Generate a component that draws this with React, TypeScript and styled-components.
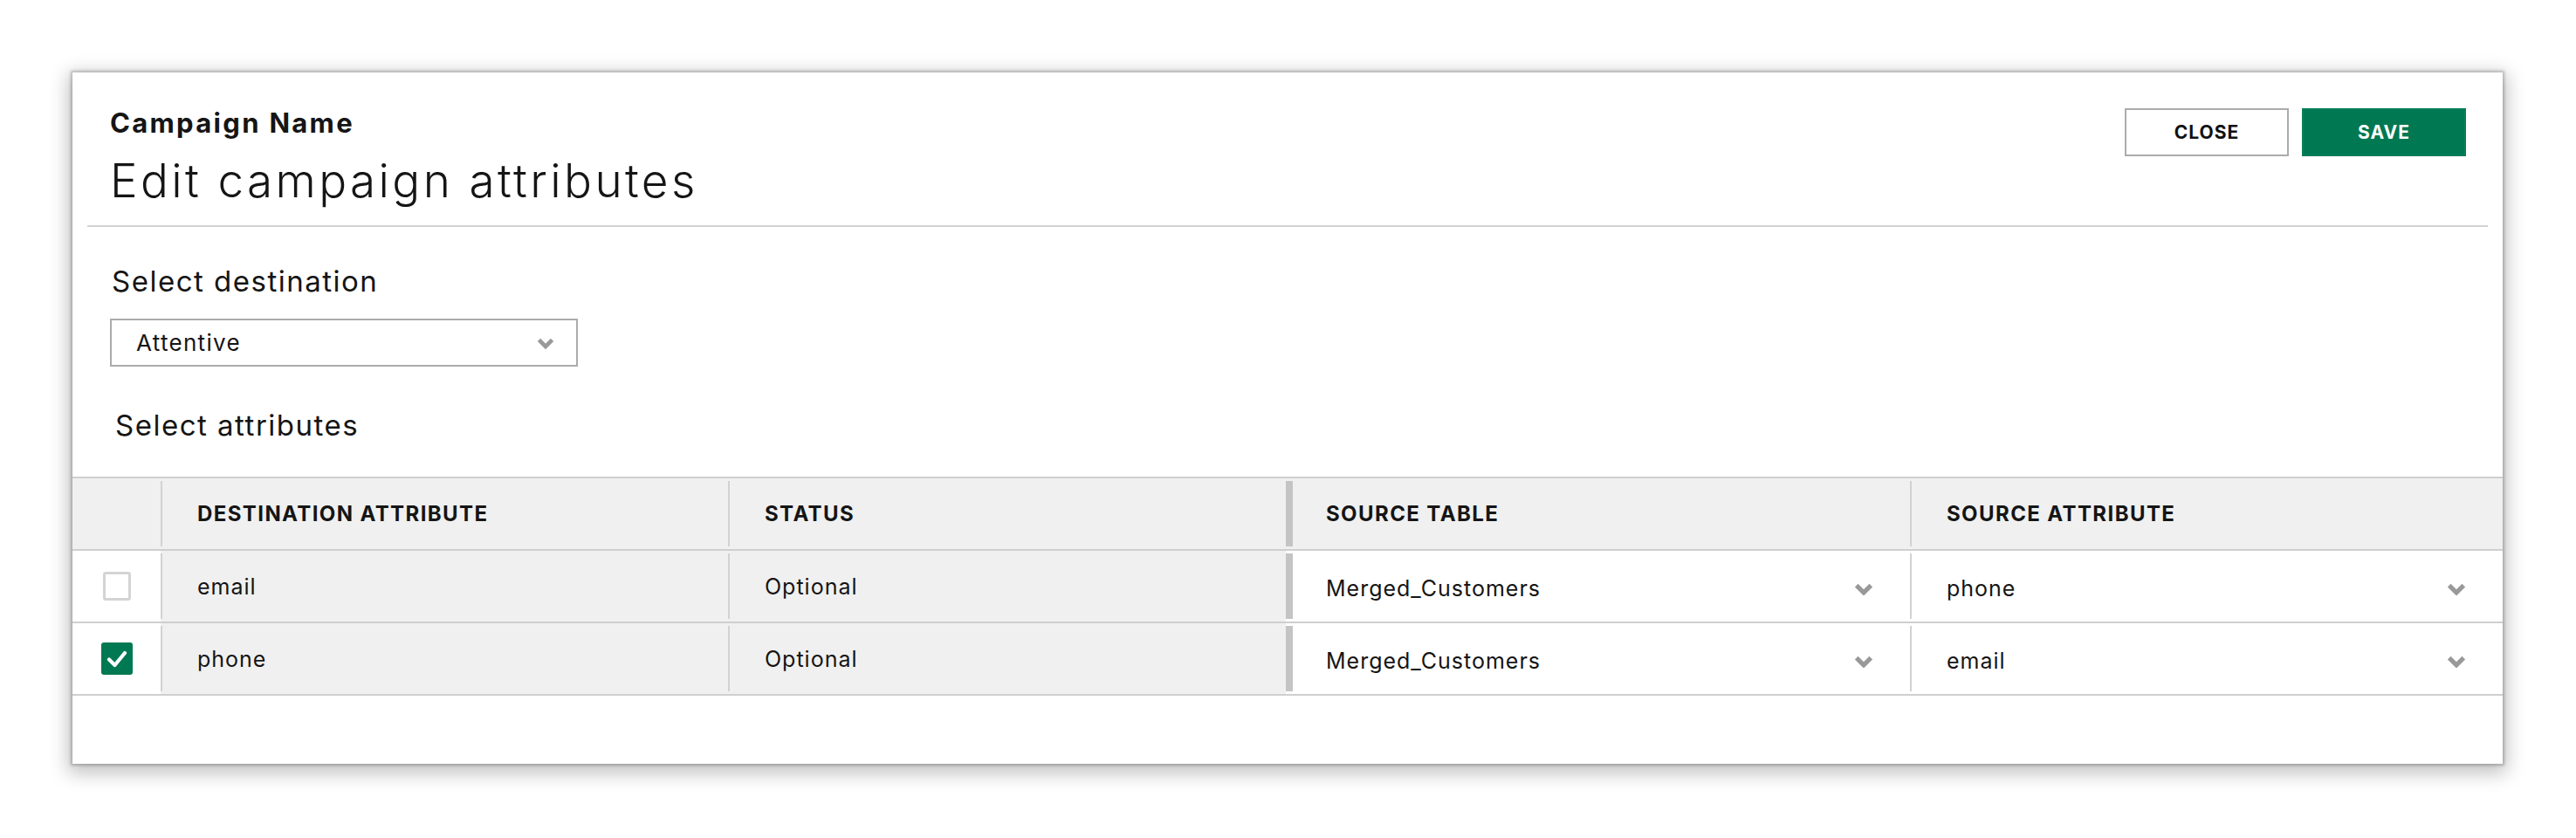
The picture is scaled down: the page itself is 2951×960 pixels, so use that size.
import React from "react";
import styled, { createGlobalStyle } from "styled-components";

const GlobalStyle = createGlobalStyle`
  html, body { margin: 0; padding: 0; background: #ffffff; }
  body { font-family: Inter, "Liberation Sans", sans-serif; color: #151515; }
  * { box-sizing: border-box; }
`;

const Page = styled.div`
  padding: 83px 0 0 83px;
  min-height: 960px;
`;

const Modal = styled.section`
  width: 2784px;
  height: 792px;
  background: #ffffff;
  display: flex;
  flex-direction: column;
  box-shadow: 0 0 3px 2px rgba(0, 0, 0, 0.22), 0 6px 20px 5px rgba(0, 0, 0, 0.24);
`;

const Header = styled.header`
  margin: 0 17px;
  padding: 40px 25px 21px 26px;
  border-bottom: 2px solid #d2d2d2;
  display: flex;
  justify-content: space-between;
  align-items: flex-start;
`;

const TitleBlock = styled.div`
  display: flex;
  flex-direction: column;
  gap: 18px;
`;

const Eyebrow = styled.div`
  font-size: 31px;
  line-height: 36px;
  font-weight: 700;
  letter-spacing: 2.3px;
`;

const Title = styled.h1`
  margin: 0;
  font-size: 53px;
  line-height: 60px;
  font-weight: 300;
  letter-spacing: 3.4px;
`;

const Actions = styled.div`
  display: flex;
  gap: 15px;
  margin-top: 1px;
`;

const Button = styled.button<{ $primary?: boolean }>`
  width: 188px;
  height: 55px;
  font-family: inherit;
  font-size: 21px;
  font-weight: 700;
  letter-spacing: 1px;
  cursor: pointer;
  border: 2px solid ${(p) => (p.$primary ? "#0a7d58" : "#ababab")};
  background: ${(p) => (p.$primary ? "#007852" : "#ffffff")};
  color: ${(p) => (p.$primary ? "#ffffff" : "#111111")};
`;

const Body = styled.div`
  padding: 42px 0 0 43px;
  display: flex;
  flex-direction: column;
  align-items: flex-start;
`;

const SectionLabel = styled.div<{ $indent: number; $gap: number }>`
  font-size: 33px;
  line-height: 40px;
  font-weight: 400;
  letter-spacing: 1.5px;
  margin-left: ${(p) => p.$indent}px;
  margin-top: ${(p) => p.$gap}px;
`;

const Dropdown = styled.div`
  margin-top: 23px;
  width: 536px;
  height: 55px;
  border: 2px solid #ababab;
  padding: 0 25px 0 28px;
  display: flex;
  align-items: center;
  justify-content: space-between;
  font-size: 26px;
  letter-spacing: 1.3px;
`;

const Table = styled.div`
  margin-top: 39px;
  border-top: 2px solid #cfcfcf;
`;

const Row = styled.div`
  display: grid;
  grid-template-columns: 101px 650px 639px 715px 1fr;
  height: 83px;
  border-bottom: 2px solid #cfcfcf;
`;

const Cell = styled.div<{ $gray?: boolean; $divider?: "thin" | "thick"; $select?: boolean }>`
  position: relative;
  display: flex;
  align-items: center;
  justify-content: ${(p) => (p.$select ? "space-between" : "flex-start")};
  padding-left: ${(p) => (p.$divider === "thick" ? 46 : 42)}px;
  padding-right: ${(p) => (p.$select ? 42 : 0)}px;
  padding-top: ${(p) => (p.$select ? 4 : 0)}px;
  background: ${(p) => (p.$gray ? "#f0f0f0" : "#ffffff")};
  font-size: 25px;
  letter-spacing: 1px;

  &::before {
    content: "";
    display: ${(p) => (p.$divider ? "block" : "none")};
    position: absolute;
    left: 0;
    top: 3px;
    bottom: 3px;
    width: ${(p) => (p.$divider === "thick" ? 8 : 2)}px;
    background: ${(p) => (p.$divider === "thick" ? "#c4c4c4" : "#d2d2d2")};
  }
`;

const HeadCell = styled(Cell)`
  font-size: 24px;
  font-weight: 700;
  letter-spacing: 1.4px;
  background: #f0f0f0;
`;

const CheckCell = styled.div<{ $gray?: boolean }>`
  display: flex;
  align-items: center;
  justify-content: center;
  background: ${(p) => (p.$gray ? "#f0f0f0" : "#ffffff")};
`;

const Box = styled.span<{ $checked?: boolean }>`
  width: ${(p) => (p.$checked ? 36 : 32)}px;
  height: ${(p) => (p.$checked ? 37 : 33)}px;
  border-radius: 3px;
  display: flex;
  align-items: center;
  justify-content: center;
  background: ${(p) => (p.$checked ? "#007852" : "#ffffff")};
  border: ${(p) => (p.$checked ? "none" : "3px solid #d4d4d4")};
`;

const ChevronWrap = styled.span`
  display: flex;
  padding-top: 3px;
`;

const Chevron = ({ size = 22 }: { size?: number }) => (
  <ChevronWrap>
    <svg width={size} height={size * 0.66} viewBox="0 0 21 14" fill="none">
      <path d="M2.5 2.5 L10.5 10.5 L18.5 2.5" stroke="#999999" strokeWidth="5" strokeLinejoin="miter" />
    </svg>
  </ChevronWrap>
);

const Check = () => (
  <svg width="24" height="22" viewBox="0 0 24 22" fill="none">
    <path d="M3 11.5 L9.5 18 L21 4" stroke="#ffffff" strokeWidth="4.2" strokeLinecap="round" strokeLinejoin="round" />
  </svg>
);

type RowData = { checked: boolean; dest: string; status: string; table: string; attr: string };

const rows: RowData[] = [
  { checked: false, dest: "email", status: "Optional", table: "Merged_Customers", attr: "phone" },
  { checked: true, dest: "phone", status: "Optional", table: "Merged_Customers", attr: "email" },
];

export default function App() {
  return (
    <>
      <GlobalStyle />
      <Page>
        <Modal>
          <Header>
            <TitleBlock>
              <Eyebrow>Campaign Name</Eyebrow>
              <Title>Edit campaign attributes</Title>
            </TitleBlock>
            <Actions>
              <Button>CLOSE</Button>
              <Button $primary>SAVE</Button>
            </Actions>
          </Header>
          <Body>
            <SectionLabel $indent={2} $gap={0}>Select destination</SectionLabel>
            <Dropdown>
              <span>Attentive</span>
              <Chevron size={20} />
            </Dropdown>
            <SectionLabel $indent={6} $gap={47}>Select attributes</SectionLabel>
          </Body>
          <Table>
            <Row>
              <CheckCell $gray />
              <HeadCell $divider="thin">DESTINATION ATTRIBUTE</HeadCell>
              <HeadCell $divider="thin">STATUS</HeadCell>
              <HeadCell $divider="thick">SOURCE TABLE</HeadCell>
              <HeadCell $divider="thin">SOURCE ATTRIBUTE</HeadCell>
            </Row>
            {rows.map((r) => (
              <Row key={r.dest}>
                <CheckCell>
                  <Box $checked={r.checked}>{r.checked && <Check />}</Box>
                </CheckCell>
                <Cell $gray $divider="thin">{r.dest}</Cell>
                <Cell $gray $divider="thin">{r.status}</Cell>
                <Cell $divider="thick" $select>
                  <span>{r.table}</span>
                  <Chevron />
                </Cell>
                <Cell $divider="thin" $select>
                  <span>{r.attr}</span>
                  <Chevron />
                </Cell>
              </Row>
            ))}
          </Table>
        </Modal>
      </Page>
    </>
  );
}
